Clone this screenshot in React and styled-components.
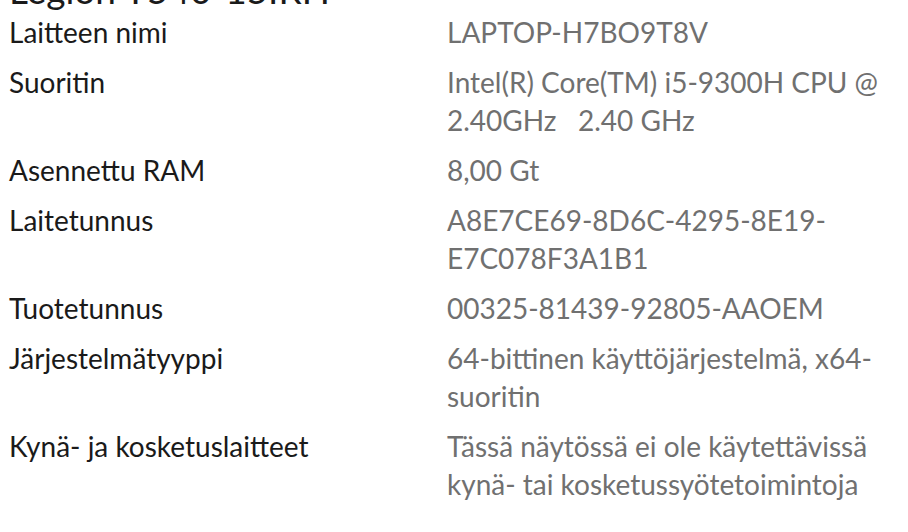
import React from "react";
import styled, { createGlobalStyle } from "styled-components";

const Global = createGlobalStyle`
  html, body { margin: 0; padding: 0; background: #ffffff; }
  body { overflow: hidden; }
`;

const Page = styled.div`
  font-family: "Lato", "Open Sans", sans-serif;
  padding-left: 9px;
  width: 908px;
  height: 532px;
  box-sizing: border-box;
  overflow: hidden;
  background: #fff;
`;

const Heading = styled.h1`
  margin: -29px 0 5px 0;
  font-size: 37px;
  line-height: 37px;
  font-weight: 400;
  color: #1a1a1a;
`;

const Specs = styled.dl`
  margin: 0;
  display: grid;
  grid-template-columns: 438px 445px;
  row-gap: 12px;
  font-size: 28px;
  line-height: 38px;
`;

const Label = styled.dt`
  margin: 0;
  color: #1a1a1a;
`;

const Value = styled.dd`
  margin: 0;
  color: #707070;
  white-space: pre-wrap;
`;

const rows = [
  ["Laitteen nimi", "LAPTOP-H7BO9T8V"],
  ["Suoritin", "Intel(R) Core(TM) i5-9300H CPU @ 2.40GHz   2.40 GHz"],
  ["Asennettu RAM", "8,00 Gt"],
  ["Laitetunnus", "A8E7CE69-8D6C-4295-8E19-E7C078F3A1B1"],
  ["Tuotetunnus", "00325-81439-92805-AAOEM"],
  ["Järjestelmätyyppi", "64-bittinen käyttöjärjestelmä, x64-suoritin"],
  ["Kynä- ja kosketuslaitteet", "Tässä näytössä ei ole käytettävissä kynä- tai kosketussyötetoimintoja"],
];

export default function App() {
  return (
    <Page>
      <Global />
      <Heading>Legion Y540-15IRH</Heading>
      <Specs>
        {rows.map(([k, v]) => (
          <React.Fragment key={k}>
            <Label>{k}</Label>
            <Value>{v}</Value>
          </React.Fragment>
        ))}
      </Specs>
    </Page>
  );
}
